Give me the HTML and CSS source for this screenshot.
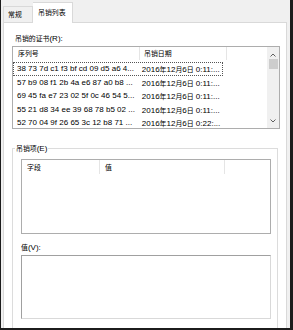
FILE: index.html
```html
<!DOCTYPE html>
<html>
<head>
<meta charset="utf-8">
<link rel="stylesheet" href="styles.css">
</head>
<body>
<div class="window">
  <div class="tabs">
    <div class="tab"><span class="cj">常规</span></div>
    <div class="tab active"><span class="cj">吊销列表</span></div>
  </div>
  <div class="panel">
    <div class="label"><span class="cj">吊销的证书</span>(R):</div>
    <div class="listbox">
      <div class="lb-main">
        <div class="hdr">
          <div class="c1"><span class="cj">序列号</span></div>
          <div class="c2"><span class="cj">吊销日期</span></div>
          <div class="c3"></div>
        </div>
        <div class="row focus"><div class="c1">38 73 7d c1 f3 bf cd 09 d5 a6 4...</div><div class="c2">2016<span class="cj">年</span>12<span class="cj">月</span>6<span class="cj">日</span> 0:11:...</div></div>
        <div class="row"><div class="c1">57 b9 08 f1 2b 4a e6 87 a0 b8 ...</div><div class="c2">2016<span class="cj">年</span>12<span class="cj">月</span>6<span class="cj">日</span> 0:11:...</div></div>
        <div class="row"><div class="c1">69 45 fa e7 23 02 5f 0c 46 54 5...</div><div class="c2">2016<span class="cj">年</span>12<span class="cj">月</span>6<span class="cj">日</span> 0:11:...</div></div>
        <div class="row"><div class="c1">55 21 d8 34 ee 39 68 78 b5 02 ...</div><div class="c2">2016<span class="cj">年</span>12<span class="cj">月</span>6<span class="cj">日</span> 0:11:...</div></div>
        <div class="row"><div class="c1">52 70 04 9f 26 65 3c 12 b8 71 ...</div><div class="c2">2016<span class="cj">年</span>12<span class="cj">月</span>6<span class="cj">日</span> 0:22:...</div></div>
      </div>
      <div class="scroll">
        <svg class="arr" width="12" height="8" viewBox="0 0 12 8"><path d="M3.5 5.5 L6 3 L8.5 5.5" fill="none" stroke="#606060" stroke-width="1"/></svg>
        <div class="thumb"></div>
        <div class="track"></div>
        <svg class="arr" width="12" height="8" viewBox="0 0 12 8"><path d="M3.5 2.5 L6 5 L8.5 2.5" fill="none" stroke="#606060" stroke-width="1"/></svg>
      </div>
    </div>
    <fieldset class="group">
      <legend><span class="cj">吊销项</span>(E)</legend>
      <div class="listview">
        <div class="hdr">
          <div class="f1"><span class="cj">字段</span></div>
          <div class="f2"><span class="cj">值</span></div>
          <div class="f3"></div>
        </div>
      </div>
      <div class="label2"><span class="cj">值</span>(V):</div>
      <div class="textbox"></div>
    </fieldset>
  </div>
</div>
</body>
</html>
```

FILE: styles.css
```css
* { box-sizing: border-box; }
html, body { margin: 0; padding: 0; }
body {
  font-family: "Liberation Sans", "Noto Sans CJK SC", sans-serif;
  font-size: 8px;
  color: #000;
  background: #f0f0f0;
}
.cj {
  font-family: "Noto Sans CJK SC", sans-serif;
  font-size: 6.9px;
}
.window {
  width: 293px;
  height: 330px;
  background: #f0f0f0;
  border-left: 1px solid #1c1c1c;
  border-right: 3px solid #1c1c1c;
  border-bottom: 2px solid #1c1c1c;
  overflow: hidden;
  display: flex;
  flex-direction: column;
}
.tabs {
  display: flex;
  align-items: flex-end;
  padding: 2px 0 0 2px;
  height: 23px;
  position: relative;
  z-index: 1;
}
.tab {
  height: 16px;
  line-height: 15px;
  padding-left: 4px;
  width: 30px;
  white-space: nowrap;
  border: 1px solid #d9d9d9;
  border-bottom: none;
  background: #f0f0f0;
  margin-bottom: 1px;
}
.tab.active {
  width: 40px;
  height: 21px;
  line-height: 19px;
  padding-left: 5px;
  background: #fff;
  border-left: none;
  margin-bottom: 0;
}
.panel {
  margin: -1px 3px 0 2px;
  background: #fff;
  border: 1px solid #d9d9d9;
  flex: 1;
  padding: 8px 6px 0 8px;
}
.label {
  height: 14px;
  line-height: 14px;
  padding-left: 3px;
  white-space: nowrap;
}
.listbox {
  margin-top: 1px;
  width: 268px;
  height: 83px;
  border: 1px solid #adadad;
  display: flex;
}
.lb-main {
  flex: 1;
  overflow: hidden;
}
.hdr {
  display: flex;
  height: 14px;
  line-height: 13px;
  border-bottom: 1px solid #fff;
}
.hdr > div {
  border-right: 1px solid #e5e5e5;
  padding-left: 5px;
  white-space: nowrap;
}
.hdr .c1 { width: 127px; }
.hdr .c2 { width: 87px; padding-left: 4px; }
.hdr .c3 { flex: 1; border-right: none; }
.row {
  display: flex;
  height: 13.5px;
  line-height: 12px;
  white-space: nowrap;
  border: 1px solid transparent;
  width: 210px;
}
.row.focus { border: 1px dotted #555; margin-top: 1px; }
.row .c1 { width: 128px; padding-left: 3px; overflow: hidden; }
.row .c2 { width: 82px; padding-left: 1px; overflow: hidden; }
.scroll {
  width: 12px;
  background: #f0f0f0;
  display: flex;
  flex-direction: column;
  align-items: center;
  padding-top: 4px;
}
.arr { display: block; flex: none; }
.thumb {
  width: 9px;
  height: 10px;
  background: #cdcdcd;
}
.track { flex: 1; }
.scroll .arr:last-child { margin-bottom: 3px; }
.group {
  margin: 14px 0 0 0;
  width: 266px;
  height: 188px;
  border: 1px solid #dcdcdc;
  padding: 5px 6px 0 8px;
}
.group legend {
  padding: 0 1px;
  margin-left: -6px;
  line-height: 10px;
  white-space: nowrap;
}
.listview {
  width: 250px;
  height: 75px;
  border: 1px solid #adadad;
}
.listview .hdr { height: 15px; line-height: 14px; }
.listview .f1 { width: 78px; }
.listview .f2 { width: 125px; }
.listview .f3 { flex: 1; border-right: none; }
.label2 {
  margin-top: 7px;
  height: 13px;
  line-height: 13px;
  white-space: nowrap;
}
.textbox {
  margin-top: 1px;
  width: 250px;
  height: 64px;
  border: 1px solid #d9d9d9;
  border-top-color: #a0a0a0;
  border-left-color: #a0a0a0;
}
```
